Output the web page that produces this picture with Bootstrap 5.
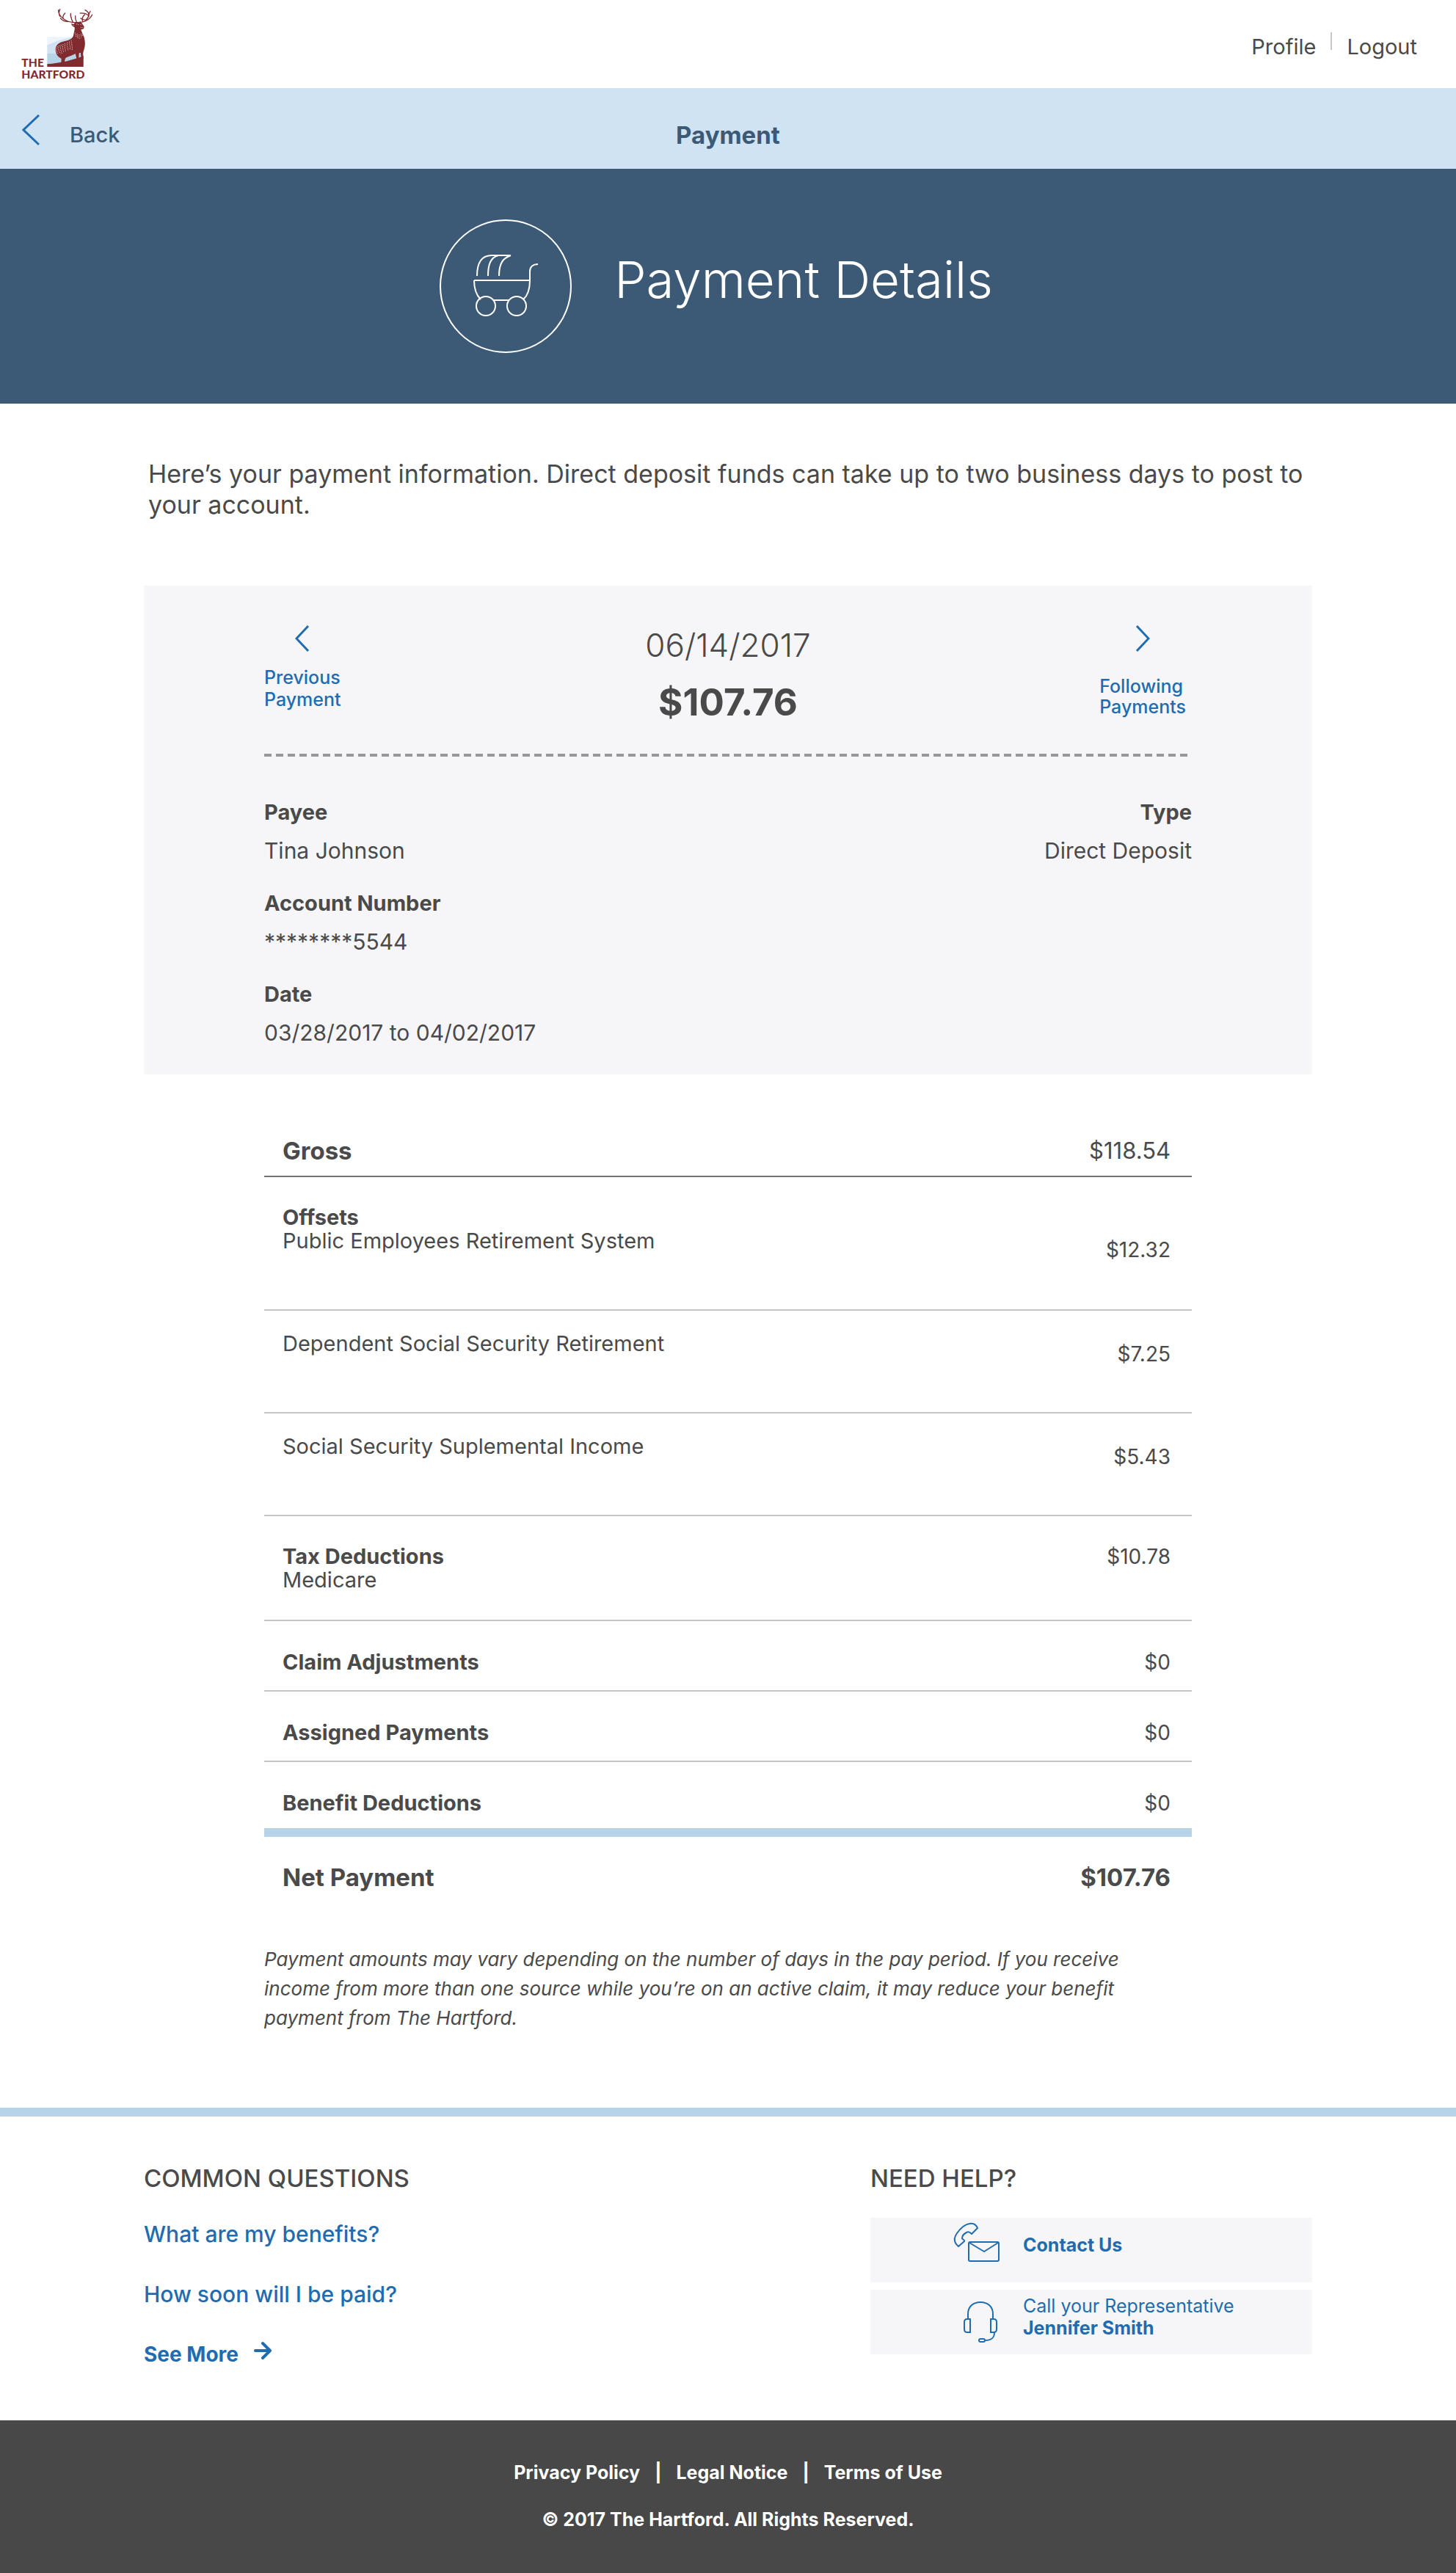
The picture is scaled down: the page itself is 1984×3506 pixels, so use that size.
<!DOCTYPE html>
<html lang="en">
<head>
<meta charset="utf-8">
<meta name="viewport" content="width=device-width, initial-scale=1">
<title>Payment Details - The Hartford</title>
<link href="https://cdn.jsdelivr.net/npm/bootstrap@5.3.0/dist/css/bootstrap.min.css" rel="stylesheet">
<style>
  :root { --ink: #4a4a4a; --navy: #3c5a76; --link: #1f6cb0; --sky: #d0e3f2; --line-blue: #b7d3e8; --panel: #f6f6f8; --maroon: #812b2f; }
  body { font-family: Inter, "Open Sans", sans-serif; color: var(--ink); font-size: 30px; line-height: 36px; }
  a { color: var(--link); text-decoration: none; }
  a:hover { text-decoration: underline; }
  svg { flex: none; display: block; }
  h1, h2, p, dl, dd, dt, ul { margin: 0; }

  .site-header { min-height: 120px; padding-right: 53px; }
  .site-nav { font-size: 29px; line-height: 40px; gap: 20px; padding-top: 8px; }
  .site-nav a { color: var(--ink); }
  .nav-divider { width: 2px; height: 24px; background: #c8c8c8; }

  .title-bar { background: var(--sky); color: var(--navy); min-height: 110px; padding: 18px 30px 0; line-height: 40px; }
  .back-link { color: var(--navy); font-size: 29px; font-weight: 500; gap: 41px; vertical-align: middle; }
  .bar-title { font-size: 33px; font-weight: 700; line-height: 40px; }

  .hero-band { background: var(--navy); min-height: 320px; gap: 58px; padding-right: 32px; }
  .hero-title { color: #fff; font-size: 69px; font-weight: 300; line-height: 80px; padding-bottom: 18px; }

  .page-wrap { max-width: 1592px; width: 100%; margin: 0 auto; }
  .inner-wrap { max-width: 1264px; width: 100%; margin: 0 auto; }
  .intro-text { font-size: 34px; line-height: 42px; padding: 75px 0 89px 6px; }

  .pay-panel { background: var(--panel); padding: 54px 0 39px; }
  .step-link { font-size: 25px; line-height: 30px; font-weight: 500; gap: 20px; }
  .step-next { line-height: 28px; gap: 33px; margin-right: 8px; }
  .pay-date { font-size: 44px; line-height: 50px; font-weight: 300; padding-top: 2px; margin-bottom: 23px; }
  .pay-amount { font-size: 51px; line-height: 60px; font-weight: 700; }
  .dash-rule { height: 4px; margin: 40px 0 58px; background: repeating-linear-gradient(90deg, #9b9694 0 10px, transparent 10px 16px); }
  .facts dt { font-size: 29px; font-weight: 700; margin-bottom: 16px; }
  .facts dd + dt { margin-top: 36px; }

  .ledger { width: 100%; margin-top: 84px; border-collapse: separate; border-spacing: 0; line-height: 32px; }
  .ledger th, .ledger td { vertical-align: top; padding: 40px 0 22px; border-bottom: 2px solid #c6c6c6; font-weight: 400; }
  .ledger th { padding-left: 25px; text-align: left; font-size: 29px; }
  .ledger td { padding-right: 29px; text-align: right; font-size: 28px; }
  .ledger strong { display: block; font-size: 29px; font-weight: 700; }
  .ledger .gross-row > * { line-height: 40px; padding-top: 0; padding-bottom: 14px; border-color: #757072; }
  .ledger .gross-row strong, .ledger .net-row strong { font-size: 33px; }
  .ledger .gross-row td { font-size: 31px; }
  .ledger .group-row > * { padding-top: 39px; padding-bottom: 38px; }
  .ledger .offset-row th { padding-bottom: 77px; }
  .ledger .offset-row:not(.group-row) th { padding-top: 29px; }
  .ledger .offset-row td { padding-top: 43px; }
  .ledger .offset-row.group-row td { padding-top: 83px; }
  .ledger .last-row > * { padding-bottom: 18px; border-bottom: 12px solid var(--line-blue); }
  .ledger .net-row > * { padding-top: 35px; padding-bottom: 0; border: 0; line-height: 40px; }
  .pay-note { font-size: 26px; line-height: 40px; font-style: italic; padding: 72px 50px 102px 0; }

  .help-area { border-top: 12px solid var(--line-blue); padding: 64px 0 72px; }
  .area-title { font-size: 33px; line-height: 40px; font-weight: 500; }
  .question-list { font-size: 30px; font-weight: 500; gap: 46px; margin-top: 38px; }
  .see-more { font-size: 28px; font-weight: 700; gap: 21px; }
  .help-col { width: 602px; }
  .help-cards { gap: 10px; margin-top: 34px; }
  .help-card { background: var(--panel); font-size: 25px; line-height: 30px; min-height: 88px; padding-left: 113px; gap: 31px; }
  .help-card span { padding-bottom: 14px; }

  .site-footer { background: #484848; color: #fff; font-size: 25px; line-height: 32px; font-weight: 700; padding: 55px 0 59px; gap: 32px; }
  .site-footer a { color: #fff; }
  .legal-links { gap: 20px; }
</style>
</head>
<body>

<header class="site-header d-flex justify-content-between align-items-center">
  <a href="#" aria-label="The Hartford home">
    <svg width="126" height="120" viewBox="0 0 378 360">
      <path fill="#edf4fa" d="M193 151h105v40H193z"/>
      <path fill="#d0e3f2" d="M193 184c30-12 55-24 105-32v70H193z"/>
      <path fill="#b7d3e8" d="M193 219h148v50H193z"/>
      <g fill="#812b2f">
        <path d="M193 262C245 258 300 246 341 228V273H193z"/>
        <path d="M290 97l12 1 6-8 22-1 6 8 8 12-2 9-11 3c3 10 8 20 13 32 4 16 5 30 1 44-3 11-6 18-6 28l2 14-8 2-4-26-6 3-1 20-9 2-5-21c-16 10-32 13-40 18l-4 12 6 9h-20l1-18c-10-6-18-12-21-22-4-14-4-26 4-35 10-11 28-14 44-18 12-4 20-10 22-20 3-14 6-24 5-33l-8-5z"/>
      </g>
      <g fill="none" stroke="#812b2f" stroke-width="4" stroke-linecap="round">
        <path d="M309 92c-14 0-34-3-48-14-14-10-23-22-22-37M246 67c-4-5-7-15-1-29M258 76c-2-9 1-16 8-22M280 88c-14 1-24-2-33-14M297 88c-5-10-9-18-8-33M313 90c-4-8-6-16-5-25M292 74c-3-5-4-10-3-16"/>
        <path d="M325 91c18-1 34-8 43-18 6-7 9-13 9-13M352 81c14-13 16-30-4-40M363 68c-1-12 2-17 6-22M338 87c-4-10 0-20 8-27M356 82c-12 0-20-2-26-7M360 62c-8-7-18-9-32-8"/>
      </g>
      <g fill="none" stroke="#f3e4e4" stroke-width="3" stroke-dasharray="3 4">
        <path d="M235 190c-6 12-4 24 4 32M242 186c-5 14-3 24 6 34M250 183c-4 14-2 26 4 36M258 181c-3 14-1 26 3 34M266 178c-2 14 0 24 3 34M275 174c-1 12 1 24 4 32M283 170c2 14 4 20 3 32M291 166c2 14 6 26 3 40M307 134l6 20M315 138l4 20M323 142l2 16M331 138l1 16M338 136l-1 14M312 98l10 3M328 100l8 2M298 96l3 10M330 113l9-1"/>
      </g>
      <g fill="#812b2f" font-family="Lato, Inter, sans-serif" font-weight="900" font-size="47">
        <text x="88" y="273">THE</text>
        <text x="88" y="321">HARTFORD</text>
      </g>
    </svg>
  </a>
  <nav class="site-nav d-flex">
    <a href="#">Profile</a>
    <span class="nav-divider"></span>
    <a href="#">Logout</a>
  </nav>
</header>

<div class="title-bar d-flex align-items-center">
  <div class="col">
    <a href="#" class="back-link d-inline-flex align-items-center">
      <svg width="24" height="56" viewBox="0 0 24 56" fill="none" stroke="#1f6cb0" stroke-width="3"><path d="M23 1L2 21 23 41"/></svg>
      Back
    </a>
  </div>
  <div class="bar-title">Payment</div>
  <div class="col"></div>
</div>

<section class="hero-band d-flex justify-content-center align-items-center">
  <svg width="180" height="182" viewBox="0 0 180 182" fill="none" stroke="#fff" stroke-width="2">
    <ellipse cx="90" cy="91" rx="89" ry="90"/>
    <path d="M51 77c0-17 6-28 20-28h26M66 77c0-17 4-25 14-28M81 77c0-17 5-24 16-28M47 83h76M47 83c0 12 3 20 9 26M123 83c0 12-2 20-9 26M74 110h20M123 83V71c0-6 4-10 11-10"/>
    <circle cx="63" cy="118" r="13"/>
    <circle cx="105" cy="118" r="13"/>
  </svg>
  <h1 class="hero-title">Payment Details</h1>
</section>

<main class="page-wrap">
  <p class="intro-text">Here’s your payment information. Direct deposit funds can take up to two business days to post to your account.</p>

  <section class="pay-panel">
    <div class="inner-wrap">
      <div class="d-flex">
        <div class="col d-flex justify-content-start align-items-start">
          <a href="#" class="step-link d-flex flex-column align-items-center">
            <svg width="20" height="36" viewBox="0 0 20 36" fill="none" stroke="#1f6cb0" stroke-width="3"><path d="M18 1L2 18 18 35"/></svg>
            <span>Previous<br>Payment</span>
          </a>
        </div>
        <div class="text-center">
          <div class="pay-date">06/14/2017</div>
          <div class="pay-amount">$107.76</div>
        </div>
        <div class="col d-flex justify-content-end align-items-start">
          <a href="#" class="step-link step-next d-flex flex-column align-items-center">
            <svg width="20" height="36" viewBox="0 0 20 36" fill="none" stroke="#1f6cb0" stroke-width="3"><path d="M2 1l16 17L2 35"/></svg>
            <span>Following<br>Payments</span>
          </a>
        </div>
      </div>
      <div class="dash-rule"></div>
      <div class="d-flex justify-content-between">
        <dl class="facts">
          <dt>Payee</dt><dd>Tina Johnson</dd>
          <dt>Account Number</dt><dd>********5544</dd>
          <dt>Date</dt><dd>03/28/2017 to 04/02/2017</dd>
        </dl>
        <dl class="facts text-end">
          <dt>Type</dt><dd>Direct Deposit</dd>
        </dl>
      </div>
    </div>
  </section>

  <div class="inner-wrap">
    <table class="ledger">
      <tbody>
        <tr class="gross-row"><th scope="row"><strong>Gross</strong></th><td>$118.54</td></tr>
        <tr class="group-row offset-row"><th scope="row"><strong>Offsets</strong>Public Employees Retirement System</th><td>$12.32</td></tr>
        <tr class="offset-row"><th scope="row">Dependent Social Security Retirement</th><td>$7.25</td></tr>
        <tr class="offset-row"><th scope="row">Social Security Suplemental Income</th><td>$5.43</td></tr>
        <tr class="group-row"><th scope="row"><strong>Tax Deductions</strong>Medicare</th><td>$10.78</td></tr>
        <tr><th scope="row"><strong>Claim Adjustments</strong></th><td>$0</td></tr>
        <tr><th scope="row"><strong>Assigned Payments</strong></th><td>$0</td></tr>
        <tr class="last-row"><th scope="row"><strong>Benefit Deductions</strong></th><td>$0</td></tr>
        <tr class="net-row"><th scope="row"><strong>Net Payment</strong></th><td><strong>$107.76</strong></td></tr>
      </tbody>
    </table>
    <p class="pay-note">Payment amounts may vary depending on the number of days in the pay period. If you receive income from more than one source while you’re on an active claim, it may reduce your benefit payment from The Hartford.</p>
  </div>
</main>

<section class="help-area">
  <div class="page-wrap d-flex justify-content-between">
    <div>
      <h2 class="area-title">COMMON QUESTIONS</h2>
      <div class="question-list d-flex flex-column align-items-start">
        <a href="#">What are my benefits?</a>
        <a href="#">How soon will I be paid?</a>
        <a href="#" class="see-more d-flex align-items-start">See More
          <svg width="24" height="26" viewBox="0 0 24 26" fill="none" stroke="#1f6cb0" stroke-width="4" stroke-linecap="round" stroke-linejoin="round"><path d="M2 13h20M12 3l10 10-10 10"/></svg>
        </a>
      </div>
    </div>
    <div class="help-col">
      <h2 class="area-title">NEED HELP?</h2>
      <div class="help-cards d-flex flex-column">
        <a href="#" class="help-card d-flex align-items-center fw-bold">
          <svg width="64" height="88" viewBox="0 0 64 88" fill="none" stroke="#1f6cb0" stroke-width="2" stroke-linejoin="round">
            <rect x="21" y="33" width="41" height="26" rx="2"/>
            <path d="M22 34l20 12 19-12"/>
            <path d="M7 39C1 34 0 28 5 21 10 14 16 9 22 8c5-1 9 1 11 6l-8 8c-2-2-4-4-7-2-4 2-6 5-6 8 1 2 4 2 3 4z"/>
          </svg>
          <span>Contact Us</span>
        </a>
        <a href="#" class="help-card d-flex align-items-center">
          <svg width="64" height="88" viewBox="0 0 64 88" fill="none" stroke="#1f6cb0" stroke-width="2">
            <path d="M20 40V33c0-10 7-16 17-16s17 6 17 16v7"/>
            <path d="M23 40v18h-4c-3 0-4-1-4-4V44c0-3 1-4 4-4zM51 40v18h4c3 0 4-1 4-4V44c0-3-1-4-4-4z"/>
            <path d="M56 58c0 8-4 11-13 11"/>
            <rect x="35" y="67" width="8" height="4" rx="2"/>
          </svg>
          <span>Call your Representative<br><b>Jennifer Smith</b></span>
        </a>
      </div>
    </div>
  </div>
</section>

<footer class="site-footer d-flex flex-column align-items-center">
  <div class="legal-links d-flex">
    <a href="#">Privacy Policy</a><span>|</span><a href="#">Legal Notice</a><span>|</span><a href="#">Terms of Use</a>
  </div>
  <div>© 2017 The Hartford. All Rights Reserved.</div>
</footer>

<script src="https://cdn.jsdelivr.net/npm/bootstrap@5.3.0/dist/js/bootstrap.bundle.min.js"></script>
</body>
</html>
